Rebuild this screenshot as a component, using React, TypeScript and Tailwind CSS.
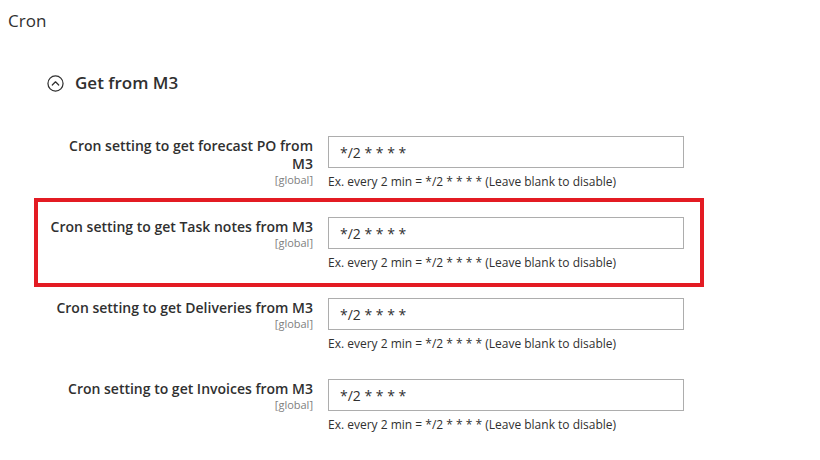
import React from "react";

const rows = [
  { label: ["Cron setting to get forecast PO from", "M3"] },
  { label: ["Cron setting to get Task notes from M3"], highlight: true },
  { label: ["Cron setting to get Deliveries from M3"] },
  { label: ["Cron setting to get Invoices from M3"] },
];

function Row({ label, highlight }: { label: string[]; highlight?: boolean }) {
  return (
    <div
      className={
        "ml-[38px] flex h-[81px] w-[662px] items-start pt-[15px] " +
        (highlight ? "outline-4 outline-solid outline-[#e31b23]" : "")
      }
    >
      <div className="flex w-[275px] flex-col items-end pt-px text-right">
        {label.map((l, i) => (
          <div key={i} className="text-[14px] font-semibold leading-[18px] text-[#303030]">
            {l}
          </div>
        ))}
        <div className="text-[11px] leading-[13px] text-[#808080]">[global]</div>
      </div>
      <div className="ml-[15px] flex w-[356px] flex-col">
        <div className="flex h-[32px] items-center border border-[#adadad] bg-white pl-[11px] text-[14px] text-[#303030]">
          */2 * * * *
        </div>
        <div className="mt-[6px] text-[12px] leading-[16px] text-[#303030]">
          Ex. every 2 min = */2 * * * * (Leave blank to disable)
        </div>
      </div>
    </div>
  );
}

export default function App() {
  return (
    <div
      className="h-[460px] w-[820px] bg-white text-[#303030]"
      style={{ fontFamily: "'Open Sans', 'Liberation Sans', sans-serif" }}
    >
      <div className="pl-[8px] pt-[11px] text-[17px] leading-[20px]">Cron</div>
      <div className="ml-[47px] mt-[42px] flex h-[20px] items-center gap-[11px]">
        <svg width="17" height="17" viewBox="0 0 18 18" fill="none">
          <circle cx="9" cy="9" r="8" stroke="#303030" strokeWidth="1.3" />
          <path d="M5.6 10.6 L9 7.2 L12.4 10.6" stroke="#303030" strokeWidth="1.3" strokeLinecap="round" strokeLinejoin="round" />
        </svg>
        <div className="text-[17px] font-semibold leading-[20px]">Get from M3</div>
      </div>
      <div className="mt-[28px]">
        {rows.map((r, i) => (
          <Row key={i} label={r.label} highlight={r.highlight} />
        ))}
      </div>
    </div>
  );
}
